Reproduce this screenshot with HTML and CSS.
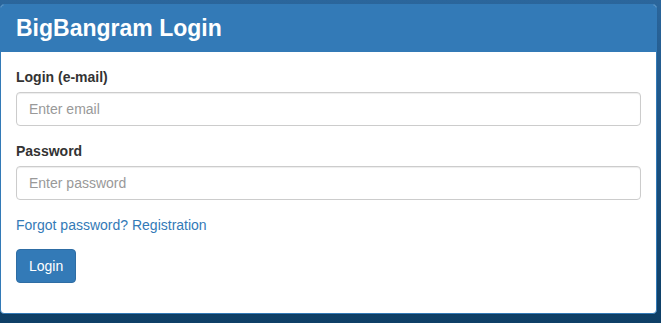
FILE: index.html
```html
<!DOCTYPE html>
<html>
<head>
    <title>BigBangram Login</title>
    <link rel="stylesheet" href="styles.css">
</head>
<body>

    <div class="panel">
        <div class="panel-heading">
            <h3 class="panel-title">BigBangram Login</h3>
        </div>
        <div class="panel-body">
            <form>
                <div class="form-group">
                    <label for="email">Login (e-mail)</label>
                    <input type="email" id="email" class="form-control" placeholder="Enter email">
                </div>
                <div class="form-group">
                    <label for="password">Password</label>
                    <input type="password" id="password" class="form-control" placeholder="Enter password">
                </div>
                <div class="form-group links">
                    <a href="#">Forgot password?</a> <a href="#">Registration</a>
                </div>
                <div class="form-group">
                    <button type="submit" class="btn">Login</button>
                </div>
            </form>
        </div>
    </div>

</body>
</html>
```

FILE: styles.css
```css
    html, body {
        height: 100%;
    }

    body {
        margin: 0;
        padding: 4px 4px 0 0;
        box-sizing: border-box;
        font-family: "Liberation Sans", Arial, sans-serif;
        font-size: 14px;
        line-height: 20px;
        color: #333;
        background: linear-gradient(to bottom, #2b669c 0%, #1c5282 45%, #0e3f66 100%);
    }

    .panel {
        background: #fff;
        border: 1px solid #337ab7;
        border-radius: 4px;
        box-shadow: 0 1px 1px rgba(0, 0, 0, 0.05);
        overflow: hidden;
    }

    .panel-heading {
        background-color: #337ab7;
        color: #fff;
        padding: 10px 15px;
    }

    .panel-title {
        margin: 0;
        font-size: 23px;
        line-height: 27px;
        font-weight: bold;
    }

    .panel-body {
        padding: 15px;
    }

    form {
        margin: 0;
    }

    .form-group {
        margin-bottom: 15px;
    }

    .links {
        margin-bottom: 14px;
    }

    label {
        display: block;
        font-weight: bold;
        margin-bottom: 5px;
    }

    .form-control {
        display: block;
        box-sizing: border-box;
        width: 100%;
        height: 34px;
        padding: 6px 12px;
        font-family: inherit;
        font-size: 14px;
        color: #555;
        background: #fff;
        border: 1px solid #ccc;
        border-radius: 4px;
        box-shadow: inset 0 1px 1px rgba(0, 0, 0, 0.075);
        margin: 0;
    }

    .form-control::placeholder {
        color: #999;
    }

    a {
        color: #337ab7;
        text-decoration: none;
    }

    .btn {
        font-family: inherit;
        font-size: 14px;
        line-height: 20px;
        padding: 6px 12px;
        color: #fff;
        background-color: #337ab7;
        border: 1px solid #2e6da4;
        border-radius: 4px;
        cursor: pointer;
        margin: 0;
    }

    .btn:hover {
        background-color: #286090;
    }
```
